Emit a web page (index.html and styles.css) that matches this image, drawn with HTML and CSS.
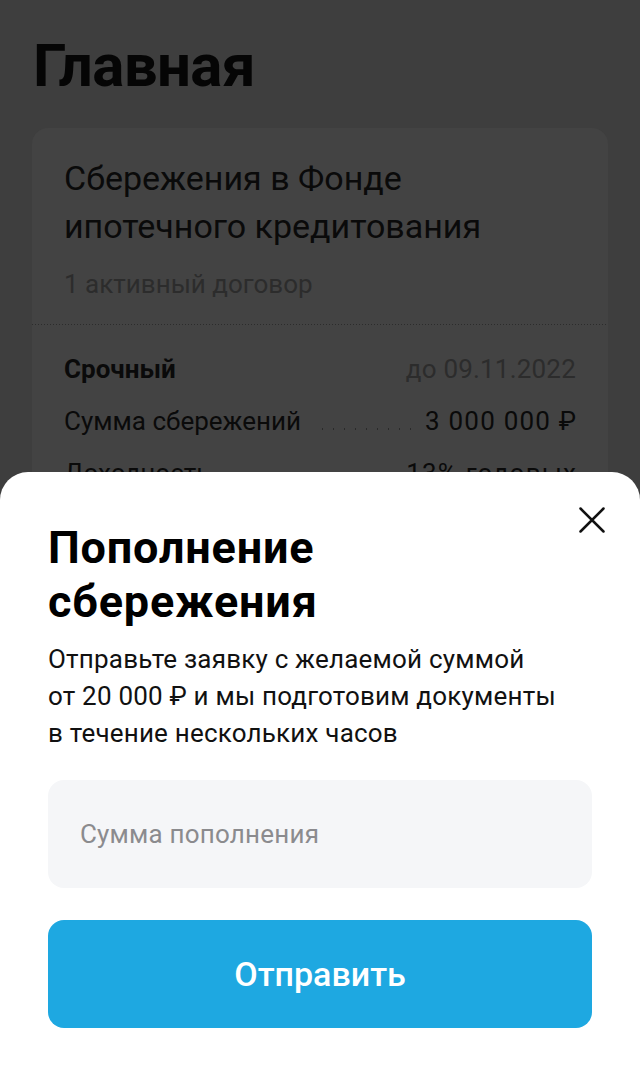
FILE: index.html
```html
<!DOCTYPE html>
<html lang="ru">
<head>
<meta charset="utf-8">
<title>Главная</title>
<link rel="stylesheet" href="styles.css">
</head>
<body>
<main class="page">
  <h1 class="page-title">Главная</h1>
  <section class="card">
    <div class="card-head">
      <h2 class="card-title">Сбережения в Фонде ипотечного кредитования</h2>
      <p class="card-sub">1 активный договор</p>
    </div>
    <div class="card-body">
      <div class="row">
        <span class="row-label strong">Срочный</span>
        <span class="row-value muted">до 09.11.2022</span>
      </div>
      <div class="row">
        <span class="row-label">Сумма сбережений</span>
        <span class="leader"></span>
        <span class="row-value num">3 000 000 ₽</span>
      </div>
      <div class="row">
        <span class="row-label">Доходность</span>
        <span class="leader"></span>
        <span class="row-value num">13% годовых</span>
      </div>
    </div>
  </section>
</main>

<div class="sheet">
  <button class="close" aria-label="Закрыть">
    <svg width="26" height="26" viewBox="0 0 26 26" fill="none" stroke="#111" stroke-width="2.5" stroke-linecap="round">
      <path d="M1.5 1.5 L24.5 24.5 M24.5 1.5 L1.5 24.5"/>
    </svg>
  </button>
  <h2 class="sheet-title">Пополнение<br>сбережения</h2>
  <p class="sheet-text">Отправьте заявку с желаемой суммой<br>от 20 000 ₽ и мы подготовим документы<br>в течение нескольких часов</p>
  <div class="field">Сумма пополнения</div>
  <button class="submit">Отправить</button>
</div>
</body>
</html>
```

FILE: styles.css
```css
* { box-sizing: border-box; }
html, body { margin: 0; padding: 0; }
body {
  width: 640px;
  height: 1076px;
  overflow: hidden;
  background: #3e3e3e;
  font-family: Roboto, "Noto Sans", sans-serif;
  color: #0a0a0a;
  position: relative;
}
.page { padding: 28px 32px 0; }
.page-title {
  margin: 0 0 0 1px;
  font-size: 60px;
  line-height: 76px;
  font-weight: 700;
  letter-spacing: -0.6px;
  color: #050505;
}
.card {
  margin-top: 24px;
  background: #434343;
  border-radius: 16px;
}
.card-head {
  padding: 26px 32px 24px;
  background-image: linear-gradient(to right, #2c2c2c 1px, transparent 1px);
  background-size: 3px 1px;
  background-repeat: repeat-x;
  background-position: 0 100%;
}
.card-title {
  margin: 0;
  font-size: 34px;
  font-weight: 400;
  line-height: 48px;
  max-width: 480px;
}
.card-sub {
  margin: 17px 0 0;
  font-size: 26px;
  line-height: 34px;
  color: #2c2c2c;
}
.card-body { padding: 26px 32px 40px; }
.row {
  display: flex;
  align-items: baseline;
  font-size: 26px;
  line-height: 36px;
  margin-bottom: 16px;
}
.strong { font-weight: 700; }
.muted { color: #2c2c2c; margin-left: auto; letter-spacing: 0.2px; }
.num { letter-spacing: 1.2px; margin-right: -1.2px; }
.leader {
  flex: 1;
  height: 2px;
  margin: 0 10px 0 16px;
  background-image: radial-gradient(circle, #2a2a2a 0.8px, transparent 1.1px);
  background-size: 11px 2px;
  background-repeat: repeat-x;
}
.sheet {
  position: absolute;
  left: 0;
  right: 0;
  top: 472px;
  bottom: 0;
  background: #fff;
  border-radius: 28px 28px 0 0;
  padding: 49px 48px 48px;
  display: flex;
  flex-direction: column;
}
.close {
  position: absolute;
  top: 35px;
  right: 35px;
  width: 26px;
  height: 26px;
  padding: 0;
  border: 0;
  background: none;
}
.close svg { display: block; }
.sheet-title {
  margin: 0;
  font-size: 45px;
  line-height: 54px;
  font-weight: 700;
  letter-spacing: 0.8px;
  color: #000;
}
.sheet-text {
  margin: 12px 0 0;
  font-size: 26px;
  line-height: 37px;
  letter-spacing: 0.2px;
  color: #111;
}
.field {
  margin-top: 28px;
  height: 108px;
  flex: none;
  border-radius: 16px;
  background: #f5f6f8;
  display: flex;
  align-items: center;
  padding: 0 32px;
  font-size: 26px;
  letter-spacing: 0.2px;
  color: #8b8b8e;
}
.submit {
  margin-top: 32px;
  height: 108px;
  flex: none;
  border: 0;
  border-radius: 16px;
  background: #1ea8e1;
  color: #fff;
  font-family: inherit;
  font-size: 34px;
  font-weight: 500;
}
```
